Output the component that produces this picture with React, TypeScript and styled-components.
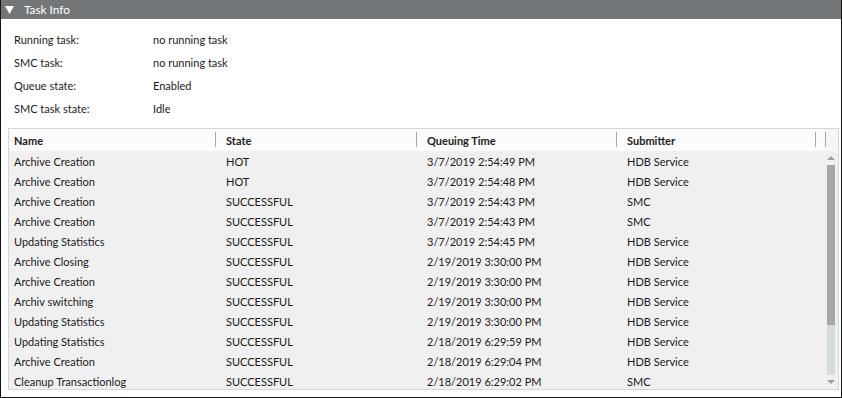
import React from "react";
import styled, { createGlobalStyle } from "styled-components";

const Global = createGlobalStyle`
  html, body { margin: 0; padding: 0; background: #ffffff; }
  body { font-family: "Lato", "Noto Sans", sans-serif; font-size: 11px; color: #1b1b1b; }
  * { box-sizing: border-box; }
`;

const Frame = styled.div`
  width: 842px;
  height: 398px;
  border: 1px solid #141414;
  border-top: none;
  background: #ffffff;
  display: flex;
  flex-direction: column;
  overflow: hidden;
`;

const TitleBar = styled.div`
  height: 19px;
  flex: none;
  background: #737679;
  color: #ffffff;
  display: flex;
  align-items: center;
  gap: 10px;
  padding-left: 4px;
  font-size: 11.8px;
`;

const Caret = styled.svg`
  width: 9px;
  height: 8px;
  display: block;
`;

const InfoGrid = styled.div`
  display: grid;
  grid-template-columns: 139px 1fr;
  grid-auto-rows: 23px;
  align-items: center;
  padding: 9px 0 0 13px;
`;

const Label = styled.div``;
const Value = styled.div``;

const Table = styled.div`
  margin: 8px 2px 7px 7px;
  flex: 1;
  min-height: 0;
  border: 1px solid #d6d6d6;
  display: flex;
  background: #f0f0f0;
`;

const Main = styled.div`
  width: 815px;
  display: flex;
  flex-direction: column;
  min-height: 0;
`;

const cols = "207px 201px 200px 199px 8px";

const HeadRow = styled.div`
  display: grid;
  grid-template-columns: ${cols};
  height: 22px;
  flex: none;
  background: #fcfcfc;
  font-weight: 700;
`;

const HeadCell = styled.div<{ $first?: boolean }>`
  position: relative;
  display: flex;
  align-items: center;
  padding-left: ${(p) => (p.$first ? 5 : 10)}px;
  &::after {
    content: "";
    position: absolute;
    right: 0;
    top: 3px;
    bottom: 4px;
    width: 1px;
    background: #a8a8a8;
  }
`;

const Body = styled.div`
  flex: 1;
  min-height: 0;
  overflow: hidden;
`;

const Row = styled.div`
  display: grid;
  grid-template-columns: ${cols};
  height: 20px;
  align-items: center;
`;

const Cell = styled.div<{ $first?: boolean }>`
  padding-left: ${(p) => (p.$first ? 5 : 10)}px;
  white-space: nowrap;
`;

const Scroll = styled.div`
  width: 14px;
  display: flex;
  flex-direction: column;
  align-items: center;
  background: #f0f0f0;
`;

const ScrollHead = styled.div`
  height: 22px;
  width: 100%;
  flex: none;
  background: #f6f6f6;
`;

const Arrow = styled.svg`
  width: 8px;
  height: 4px;
  display: block;
  flex: none;
  margin: 5px 0;
`;

const Track = styled.div`
  flex: 1;
  width: 8px;
  display: flex;
  flex-direction: column;
  background: #d4dcdd;
`;

const Thumb = styled.div`
  height: 160px;
  background: #a5a7a8;
`;

const info: [string, string][] = [
  ["Running task:", "no running task"],
  ["SMC task:", "no running task"],
  ["Queue state:", "Enabled"],
  ["SMC task state:", "Idle"],
];

const rows: [string, string, string, string][] = [
  ["Archive Creation", "HOT", "3/7/2019 2:54:49 PM", "HDB Service"],
  ["Archive Creation", "HOT", "3/7/2019 2:54:48 PM", "HDB Service"],
  ["Archive Creation", "SUCCESSFUL", "3/7/2019 2:54:43 PM", "SMC"],
  ["Archive Creation", "SUCCESSFUL", "3/7/2019 2:54:43 PM", "SMC"],
  ["Updating Statistics", "SUCCESSFUL", "3/7/2019 2:54:45 PM", "HDB Service"],
  ["Archive Closing", "SUCCESSFUL", "2/19/2019 3:30:00 PM", "HDB Service"],
  ["Archive Creation", "SUCCESSFUL", "2/19/2019 3:30:00 PM", "HDB Service"],
  ["Archiv switching", "SUCCESSFUL", "2/19/2019 3:30:00 PM", "HDB Service"],
  ["Updating Statistics", "SUCCESSFUL", "2/19/2019 3:30:00 PM", "HDB Service"],
  ["Updating Statistics", "SUCCESSFUL", "2/18/2019 6:29:59 PM", "HDB Service"],
  ["Archive Creation", "SUCCESSFUL", "2/18/2019 6:29:04 PM", "HDB Service"],
  ["Cleanup Transactionlog", "SUCCESSFUL", "2/18/2019 6:29:02 PM", "SMC"],
];

export default function App() {
  return (
    <>
      <Global />
      <Frame>
        <TitleBar>
          <Caret viewBox="0 0 9 8">
            <path d="M0 0 H9 L4.5 8 Z" fill="#ffffff" />
          </Caret>
          <span>Task Info</span>
        </TitleBar>
        <InfoGrid>
          {info.map(([l, v]) => (
            <React.Fragment key={l}>
              <Label>{l}</Label>
              <Value>{v}</Value>
            </React.Fragment>
          ))}
        </InfoGrid>
        <Table>
          <Main>
            <HeadRow>
              <HeadCell $first>Name</HeadCell>
              <HeadCell>State</HeadCell>
              <HeadCell>Queuing Time</HeadCell>
              <HeadCell>Submitter</HeadCell>
              <HeadCell />
            </HeadRow>
            <Body>
              {rows.map((r, i) => (
                <Row key={i}>
                  <Cell $first>{r[0]}</Cell>
                  <Cell>{r[1]}</Cell>
                  <Cell>{r[2]}</Cell>
                  <Cell>{r[3]}</Cell>
                  <Cell />
                </Row>
              ))}
            </Body>
          </Main>
          <Scroll>
            <ScrollHead />
            <Arrow viewBox="0 0 8 4">
              <path d="M0 4 L4 0 L8 4 Z" fill="#a0a0a0" />
            </Arrow>
            <Track>
              <Thumb />
            </Track>
            <Arrow viewBox="0 0 8 4">
              <path d="M0 0 L8 0 L4 4 Z" fill="#a0a0a0" />
            </Arrow>
          </Scroll>
        </Table>
      </Frame>
    </>
  );
}
